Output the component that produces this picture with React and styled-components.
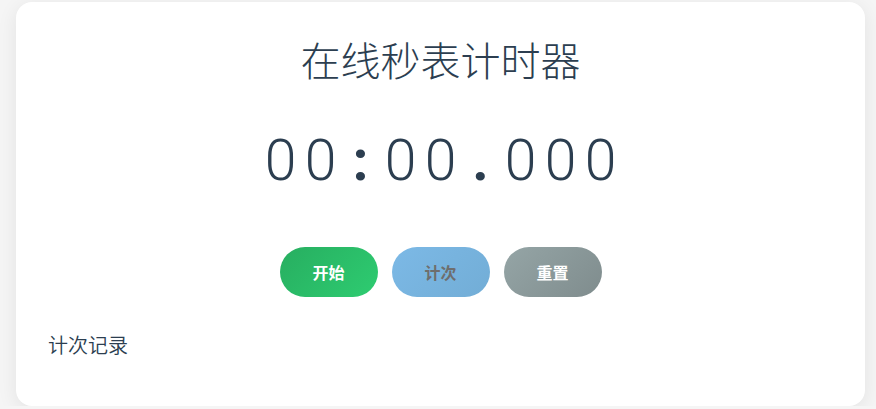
import React from "react";
import styled, { createGlobalStyle } from "styled-components";

const GlobalStyle = createGlobalStyle`
  html, body {
    margin: 0;
    padding: 0;
    background: #f5f5f5;
    font-family: "Noto Sans CJK SC", "Noto Sans", sans-serif;
  }
`;

const Page = styled("div")`
  padding: 2px 11px 0 16px;
`;

const Card = styled("div")`
  background: #fff;
  border-radius: 16px;
  box-shadow: 0 4px 20px rgba(0, 0, 0, 0.08);
  padding: 27px 32px 40px;
  height: 404px;
  box-sizing: border-box;
`;

const Title = styled("h1")`
  margin: 0;
  text-align: center;
  font-size: 40px;
  font-weight: 300;
  color: #2c3e50;
  line-height: 60px;
`;

const Display = styled("div")`
  display: flex;
  justify-content: center;
  margin-top: 37px;
  font-family: Roboto, "Open Sans", sans-serif;
  font-size: 57px;
  font-weight: 300;
  color: #2c3e50;
  line-height: 70px;
`;

const Cell = styled("span")`
  width: 40px;
  text-align: center;
  font-weight: ${(p) => (p.$sep ? 700 : 300)};
`;

const Controls = styled("div")`
  display: flex;
  justify-content: center;
  gap: 14px;
  margin-top: 51px;
`;

const Button = styled("button")`
  width: 98px;
  height: 50px;
  border: none;
  border-radius: 25px;
  font-family: "Noto Sans CJK SC", sans-serif;
  font-size: 16px;
  font-weight: 700;
  color: ${(p) => p.$fg || "#fff"};
  background: ${(p) => p.$bg};
  cursor: pointer;
`;

const LapTitle = styled("div")`
  margin-top: 33px;
  font-size: 20px;
  font-weight: 350;
  color: #2c3e50;
`;

const time = "00:00.000";

export default function App() {
  return (
    <>
      <GlobalStyle />
      <Page>
        <Card>
          <Title>在线秒表计时器</Title>
          <Display>
            {time.split("").map((ch, i) => (
              <Cell key={i} $sep={ch === ":" || ch === "."}>
                {ch}
              </Cell>
            ))}
          </Display>
          <Controls>
            <Button $bg="linear-gradient(135deg, #27ae60, #2ecc71)">开始</Button>
            <Button $bg="linear-gradient(135deg, #7cb9e6, #72add6)" $fg="#6e6e6e" disabled>
              计次
            </Button>
            <Button $bg="linear-gradient(135deg, #95a5a6, #7f8c8d)">重置</Button>
          </Controls>
          <LapTitle>计次记录</LapTitle>
        </Card>
      </Page>
    </>
  );
}
